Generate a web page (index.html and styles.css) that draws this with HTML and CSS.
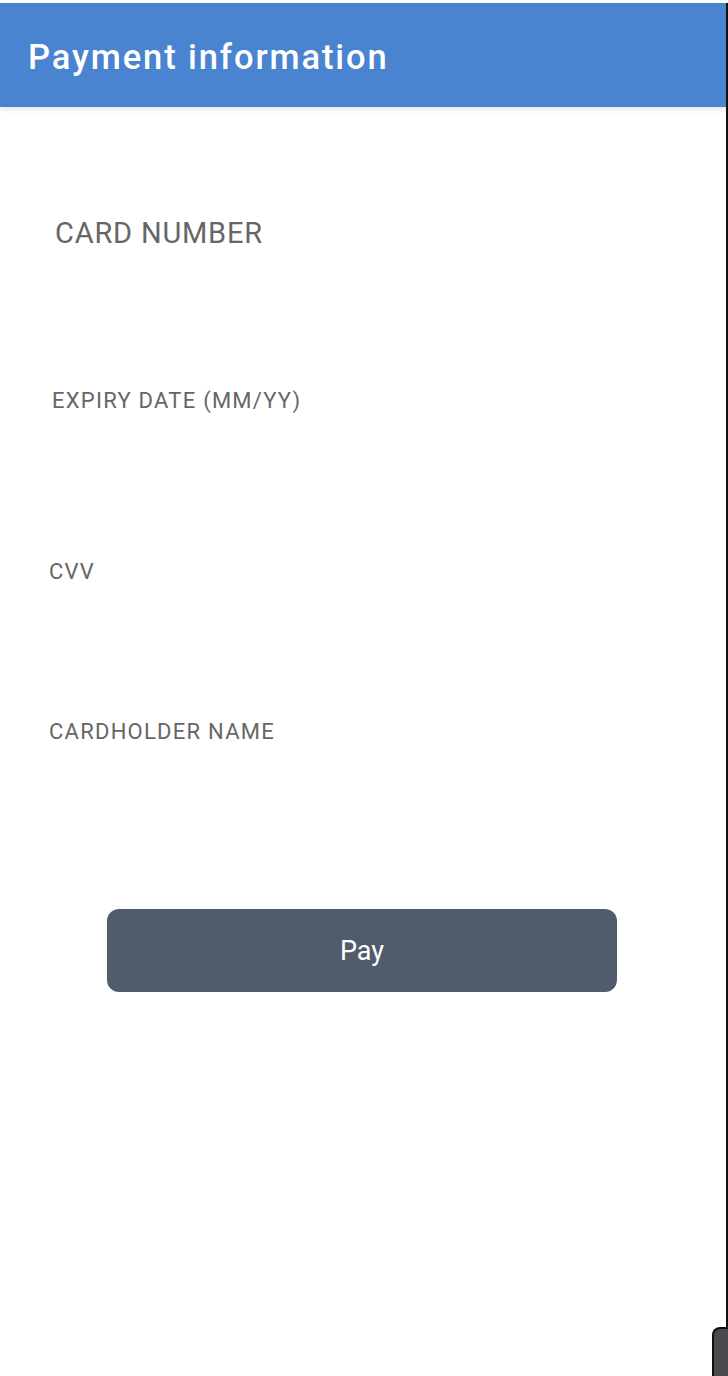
FILE: index.html
```html
<!DOCTYPE html>
<html lang="en">
<head>
<meta charset="utf-8">
<title>Payment information</title>
<link rel="stylesheet" href="styles.css">
</head>
<body>
<div class="screen">
  <header class="appbar">
    <h1 class="appbar-title">Payment information</h1>
  </header>
  <main class="form">
    <div class="field field-card">
      <label class="field-label field-label-lg">CARD NUMBER</label>
    </div>
    <div class="field field-expiry">
      <label class="field-label field-label-expiry">EXPIRY DATE (MM/YY)</label>
    </div>
    <div class="field field-cvv">
      <label class="field-label">CVV</label>
    </div>
    <div class="field field-name">
      <label class="field-label">CARDHOLDER NAME</label>
    </div>
    <div class="actions">
      <button class="pay-btn" type="button">Pay</button>
    </div>
  </main>
  <div class="corner-handle"></div>
</div>
</body>
</html>
```

FILE: styles.css
```css
* {
  box-sizing: border-box;
}

html, body {
  margin: 0;
  padding: 0;
  background: #ffffff;
}

body {
  font-family: Roboto, "Liberation Sans", Arial, sans-serif;
  overflow: hidden;
}

.screen {
  position: relative;
  margin-top: 3px;
  height: 1373px;
  width: 728px;
  border-right: 2px solid #111114;
  background: #ffffff;
}

.appbar {
  height: 104px;
  background: #4a83d0;
  padding: 34px 28px 0;
  box-shadow: 0 2px 6px rgba(0, 0, 0, 0.12);
}

.appbar-title {
  margin: 0;
  font-size: 34.5px;
  line-height: 40px;
  font-weight: 500;
  letter-spacing: 1.9px;
  color: #ffffff;
}

.form {
  display: flex;
  flex-direction: column;
}

.field-label {
  display: block;
  color: #666666;
  font-size: 22px;
  line-height: 26px;
  font-weight: 400;
  letter-spacing: 1.25px;
  padding-left: 49px;
}

.field-label-lg {
  font-size: 29px;
  line-height: 34px;
  letter-spacing: 0.8px;
  padding-left: 55px;
}

.field-label-expiry {
  padding-left: 52px;
}

.field-card {
  margin-top: 109px;
}

.field-expiry {
  margin-top: 138px;
}

.field-cvv {
  margin-top: 145px;
}

.field-name {
  margin-top: 134px;
}

.actions {
  display: flex;
  justify-content: center;
  margin-top: 164px;
}

.pay-btn {
  width: 510px;
  height: 83px;
  margin-left: -2px;
  border: none;
  border-radius: 12px;
  background: #505c6b;
  color: #ffffff;
  font-family: Roboto, "Liberation Sans", Arial, sans-serif;
  font-size: 27px;
  font-weight: 400;
  padding-top: 2px;
}

.corner-handle {
  position: absolute;
  right: -2px;
  bottom: -3px;
  width: 16px;
  height: 52px;
  background: #4a4a4e;
  border: 2px solid #111;
  border-right: none;
  border-bottom: none;
  border-top-left-radius: 8px;
}
```
